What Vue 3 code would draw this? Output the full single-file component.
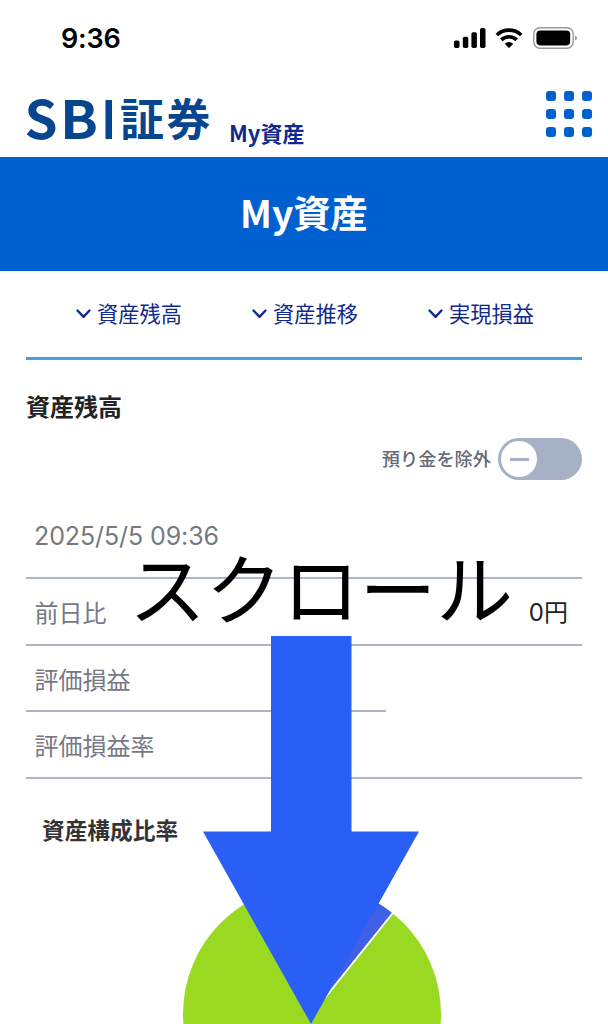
<script setup>
const tabs = ['資産残高', '資産推移', '実現損益']

const rows = [
  { label: '前日比', value: '0円' },
  { label: '評価損益', value: '', short: true },
  { label: '評価損益率', value: '' }
]

const dots = [0, 1, 2].flatMap(r => [0, 1, 2].map(c => ({ x: c * 18, y: r * 18 })))
</script>

<template>
  <div class="page">
    <div class="status">
      <span class="time">9:36</span>
      <div class="status-icons">
        <svg class="signal" width="32" height="20" viewBox="0 0 32 20">
          <rect x="0" y="12.5" width="5.5" height="7.5" rx="1.7" />
          <rect x="8.8" y="8.7" width="5.5" height="11.3" rx="1.7" />
          <rect x="17.4" y="4.3" width="5.5" height="15.7" rx="1.7" />
          <rect x="26" y="0" width="5.5" height="20" rx="1.7" />
        </svg>
        <svg class="wifi" width="28" height="20" viewBox="0 0 28 20">
          <path d="M1.8 7 A17.6 17.6 0 0 1 26.2 7" />
          <path d="M6.3 11.9 A11 11 0 0 1 21.7 11.9" />
          <path class="wifi-dot" d="M9.7 15.7 Q14 12.3 18.3 15.7 L14.7 19.5 Q14 20 13.3 19.5 Z" />
        </svg>
        <svg class="battery" width="46" height="22" viewBox="0 0 46 22">
          <rect class="battery-case" x="0.8" y="0.8" width="39.4" height="20.4" rx="6.2" />
          <rect x="3.4" y="3.4" width="33.8" height="15" rx="3.8" />
          <path class="battery-tip" d="M42 8.5 Q44 9.3 44 11 Q44 12.7 42 13.5 Z" />
        </svg>
      </div>
    </div>

    <header class="header">
      <svg class="logo" width="188" height="56" viewBox="0 0 188 56">
        <text class="logo-latin" x="-1.5" y="46.5">S</text>
        <text class="logo-latin" x="34" y="46.5" textLength="38" lengthAdjust="spacingAndGlyphs">B</text>
        <text class="logo-latin" x="75.5" y="46.5" textLength="14.5" lengthAdjust="spacingAndGlyphs">I</text>
        <text class="logo-kanji" x="94 140.5" y="43.5">証券</text>
      </svg>
      <span class="service">My資産</span>
      <svg class="menu" width="46" height="46" viewBox="0 0 46 46">
        <rect v-for="(d, i) in dots" :key="i" :x="d.x" :y="d.y" width="10" height="10" rx="3" />
      </svg>
    </header>

    <h1 class="title">My資産</h1>

    <nav class="tabs">
      <a v-for="tab in tabs" :key="tab" class="tab">
        <svg width="15" height="10" viewBox="0 0 15 10">
          <path d="M1.5 1.5 L7.5 7.8 L13.5 1.5" />
        </svg>
        <span>{{ tab }}</span>
      </a>
    </nav>

    <main class="content">
      <h2 class="heading">資産残高</h2>

      <div class="exclude">
        <span>預り金を除外</span>
        <div class="toggle">
          <div class="knob"><i></i></div>
        </div>
      </div>

      <div class="date">2025/5/5 09:36</div>
      <div v-for="row in rows" :key="row.label" class="row" :class="{ short: row.short }">
        <span>{{ row.label }}</span>
        <span class="value">{{ row.value }}</span>
      </div>

      <h3 class="subheading">資産構成比率</h3>
      <svg class="chart" width="258" height="142" viewBox="0 0 258 142">
        <circle cx="129" cy="129" r="129" fill="#9ad922" />
        <path d="M129 129 V0 A129 129 0 0 1 209.5 28.2 Z" fill="#405fe5" />
        <path d="M129 129 L211 26.5" stroke="#fff" stroke-width="2" />
      </svg>
    </main>

    <!-- scroll hint laid over the page -->
    <div class="hint">スクロール</div>
    <svg class="arrow" width="216" height="388" viewBox="0 0 216 388">
      <path d="M68 0 H148.5 V195.5 H216 L108 388 L0 195.5 H68 Z" />
    </svg>
  </div>
</template>

<style>
body {
  margin: 0;
  overflow: hidden;
}
</style>

<style scoped>
.page {
  position: relative;
  width: 608px;
  height: 1024px;
  overflow: hidden;
  background: #fff;
  font-family: 'Noto Sans CJK JP', sans-serif;
  color: #222;
}

h1, h2, h3 {
  margin: 0;
}

.status {
  display: flex;
  justify-content: space-between;
  align-items: center;
  height: 76px;
  padding: 0 29px 0 61px;
  box-sizing: border-box;
}

.time {
  padding-top: 2px;
  font: 600 27px/32px Inter, sans-serif;
  letter-spacing: -0.2px;
  color: #000;
}

.status-icons {
  display: flex;
  align-items: center;
}

.wifi {
  margin-left: 9px;
  margin-right: 10px;
}

.wifi path {
  fill: none;
  stroke: #000;
  stroke-width: 3.6;
}

.wifi .wifi-dot {
  fill: #000;
  stroke: none;
}

.battery .battery-case {
  fill: none;
  stroke: #999;
  stroke-width: 1.4;
}

.battery-tip {
  fill: #999;
}

.header {
  display: flex;
  height: 81px;
  padding: 0 16px 0 26px;
}

.logo {
  margin-top: 16px;
  overflow: visible;
  fill: #07468f;
}

.logo-latin {
  font-size: 53px;
  font-weight: 700;
}

.logo-kanji {
  font-size: 44px;
  font-weight: 700;
}

.service {
  margin: 41px 0 0 15px;
  font-size: 22px;
  line-height: 30px;
  font-weight: 700;
  color: #11298c;
}

.menu {
  margin: 15px 0 0 auto;
  fill: #0060d0;
}

.title {
  height: 114px;
  background: #0060d0;
  color: #fff;
  font-size: 37.3px;
  line-height: 110px;
  font-weight: 700;
  text-align: center;
}

.tabs {
  display: flex;
  justify-content: space-around;
  height: 86px;
  margin: 0 26px;
  padding: 0 13px 0 15px;
  border-bottom: 3px solid #42a0e8;
}

.tab {
  display: flex;
  align-items: center;
  gap: 6px;
  height: 83px;
  font-size: 21.2px;
  color: #11298c;
}

.tab svg {
  margin-top: 3px;
  fill: none;
  stroke: #11298c;
  stroke-width: 2.4;
  stroke-linecap: round;
  stroke-linejoin: round;
}

.content {
  padding: 0 26px;
}

.heading {
  padding-top: 28px;
  font-size: 24px;
  line-height: 36px;
}

.exclude {
  display: flex;
  justify-content: flex-end;
  align-items: center;
  gap: 7px;
  margin-top: 14px;
  font-size: 18.2px;
  font-weight: 500;
  color: #656973;
}

.exclude span {
  margin-top: -2px;
}

.toggle {
  width: 84px;
  height: 42px;
  padding: 3px;
  box-sizing: border-box;
  border-radius: 21px;
  background: #a7b1c5;
}

.knob {
  display: flex;
  align-items: center;
  justify-content: center;
  width: 36px;
  height: 36px;
  border-radius: 50%;
  background: #fff;
}

.knob i {
  width: 19px;
  height: 3px;
  background: #a7b1c5;
}

.date {
  height: 97px;
  padding: 41px 8px 0;
  box-sizing: border-box;
  font: 400 25px/30px Inter, sans-serif;
  letter-spacing: -0.1px;
  color: #767983;
}

.row {
  display: flex;
  justify-content: space-between;
  height: 66.6px;
  padding: 0 14px 0 8.5px;
  box-sizing: border-box;
  border-top: 2px solid #acb4c8;
  font-size: 24px;
  line-height: 65px;
  color: #767983;
}

.row:last-of-type {
  border-bottom: 2px solid #acb4c8;
  height: 68.6px;
}

/* the line under the short row stops part of the way across */
.row.short + .row {
  border-top: 0;
  padding-top: 2px;
  background: linear-gradient(#acb4c8, #acb4c8) 0 0 / 360px 2px no-repeat;
}

.value {
  padding-top: 1px;
  font-family: Inter, 'Noto Sans CJK JP', sans-serif;
  color: #222;
}

.subheading {
  margin: 34px 0 0 16px;
  font-size: 22.7px;
  line-height: 34px;
  color: #333;
}

.chart {
  display: block;
  margin: 38px 0 0 157px;
}

.hint {
  position: absolute;
  left: 129px;
  top: 547px;
  font-size: 76.8px;
  line-height: 78px;
  color: #000;
  white-space: nowrap;
}

.arrow {
  position: absolute;
  left: 203px;
  top: 636px;
  fill: #295ff5;
}
</style>
